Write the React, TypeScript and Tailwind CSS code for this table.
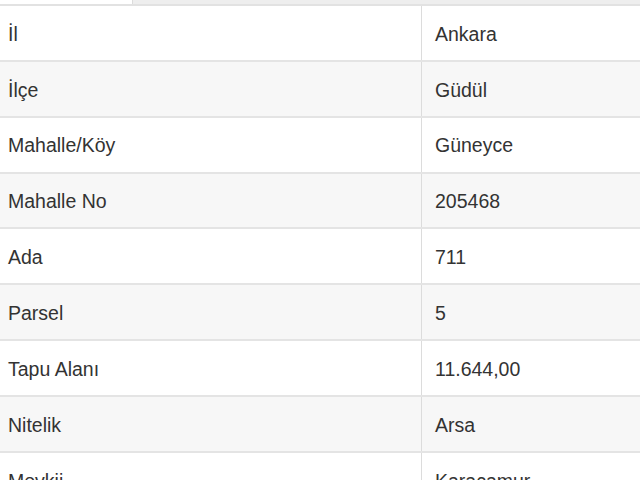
const rows: [string, string][] = [
  ["İl", "Ankara"],
  ["İlçe", "Güdül"],
  ["Mahalle/Köy", "Güneyce"],
  ["Mahalle No", "205468"],
  ["Ada", "711"],
  ["Parsel", "5"],
  ["Tapu Alanı", "11.644,00"],
  ["Nitelik", "Arsa"],
  ["Mevkii", "Karaçamur"],
];

export default function App() {
  return (
    <div className="w-[640px] h-[480px] overflow-hidden bg-white font-['Liberation_Sans',Arial,sans-serif] text-[19.5px] text-[#333]">
      <div className="flex h-[6px] border-b-2 border-[#e2e2e2]">
        <div className="w-[133px] bg-white border-r border-[#dcdcdc]" />
        <div className="flex-1 bg-[#eeeeee]" />
      </div>
      <div>
        {rows.map(([label, value], i) => (
          <div
            key={label}
            className={`flex h-[55.85px] border-b-2 border-[#e4e4e4] ${
              i % 2 === 1 ? "bg-[#f7f7f7]" : "bg-white"
            }`}
          >
            <div className="w-[422px] border-r border-[#dcdcdc] flex items-center pl-2 pt-[3px]">
              {label}
            </div>
            <div className="flex-1 flex items-center pl-[13px] pt-[3px]">{value}</div>
          </div>
        ))}
      </div>
    </div>
  );
}
